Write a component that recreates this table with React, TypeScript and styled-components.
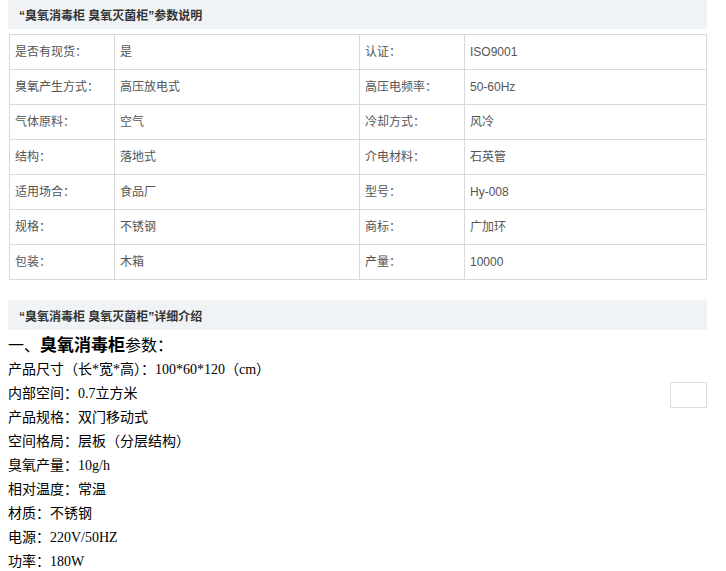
import styled, { createGlobalStyle } from "styled-components";

const specs: [string, string, string, string][] = [
  ["是否有现货：", "是", "认证：", "ISO9001"],
  ["臭氧产生方式：", "高压放电式", "高压电频率：", "50-60Hz"],
  ["气体原料：", "空气", "冷却方式：", "风冷"],
  ["结构：", "落地式", "介电材料：", "石英管"],
  ["适用场合：", "食品厂", "型号：", "Hy-008"],
  ["规格：", "不锈钢", "商标：", "广加环"],
  ["包装：", "木箱", "产量：", "10000"],
];

const details = [
  "产品尺寸（长*宽*高）：100*60*120（cm）",
  "内部空间：0.7立方米",
  "产品规格：双门移动式",
  "空间格局：层板（分层结构）",
  "臭氧产量：10g/h",
  "相对温度：常温",
  "材质：不锈钢",
  "电源：220V/50HZ",
  "功率：180W",
];

const App = () => {
  return (
    <Page>
      <GlobalStyle />
      <SectionTitle $height={29}>“臭氧消毒柜 臭氧灭菌柜”参数说明</SectionTitle>
      <SpecTable>
        <colgroup>
          <col style={{ width: 105 }} />
          <col style={{ width: 245 }} />
          <col style={{ width: 105 }} />
          <col />
        </colgroup>
        <tbody>
          {specs.map((row) => (
            <tr key={row[0]}>
              {row.map((cell, i) => (
                <Cell key={i}>{cell}</Cell>
              ))}
            </tr>
          ))}
        </tbody>
      </SpecTable>
      <SectionTitle $height={30}>“臭氧消毒柜 臭氧灭菌柜”详细介绍</SectionTitle>
      <Detail>
        <Headline>
          一、<strong>臭氧消毒柜</strong>参数：
        </Headline>
        {details.map((line, i) => (
          <div key={line}>
            {i === 1 && <EmptyFrame />}
            <Line>{line}</Line>
          </div>
        ))}
      </Detail>
    </Page>
  );
};

const GlobalStyle = createGlobalStyle`
  body {
    margin: 0;
    background: #fff;
    font-family: "Liberation Sans", "Noto Sans CJK SC", sans-serif;
  }
`;

const Page = styled.div`
  width: 699px;
  margin-left: 8px;
`;

const SectionTitle = styled.div<{ $height: number }>`
  height: ${({ $height }) => $height}px;
  display: flex;
  align-items: center;
  padding-left: 11px;
  background: #f0f3f6;
  color: #333;
  font-size: 12px;
  font-weight: 700;
  font-family: "Liberation Sans", "Noto Sans CJK SC", sans-serif;
`;

const SpecTable = styled.table`
  width: 698px;
  margin: 5px 0 20px 1px;
  border-collapse: collapse;
  table-layout: fixed;
`;

const Cell = styled.td`
  height: 34px;
  padding: 0 5px;
  border: 1px solid #d9d9d9;
  color: #555;
  font-size: 12px;
  line-height: 18px;
`;

const Detail = styled.div`
  padding-top: 4px;
  color: #000;
  font-family: "Liberation Serif", "Noto Sans CJK SC", serif;
`;

const Headline = styled.div`
  font-size: 16px;
  line-height: 24px;
  font-family: "Liberation Sans", "Noto Sans CJK SC", sans-serif;

  strong {
    font-size: 17px;
    font-weight: 700;
  }
`;

const Line = styled.div`
  font-size: 14px;
  line-height: 24px;
`;

const EmptyFrame = styled.div`
  float: right;
  width: 35px;
  height: 24px;
  border: 1px solid #ddd;
`;

export default App;
